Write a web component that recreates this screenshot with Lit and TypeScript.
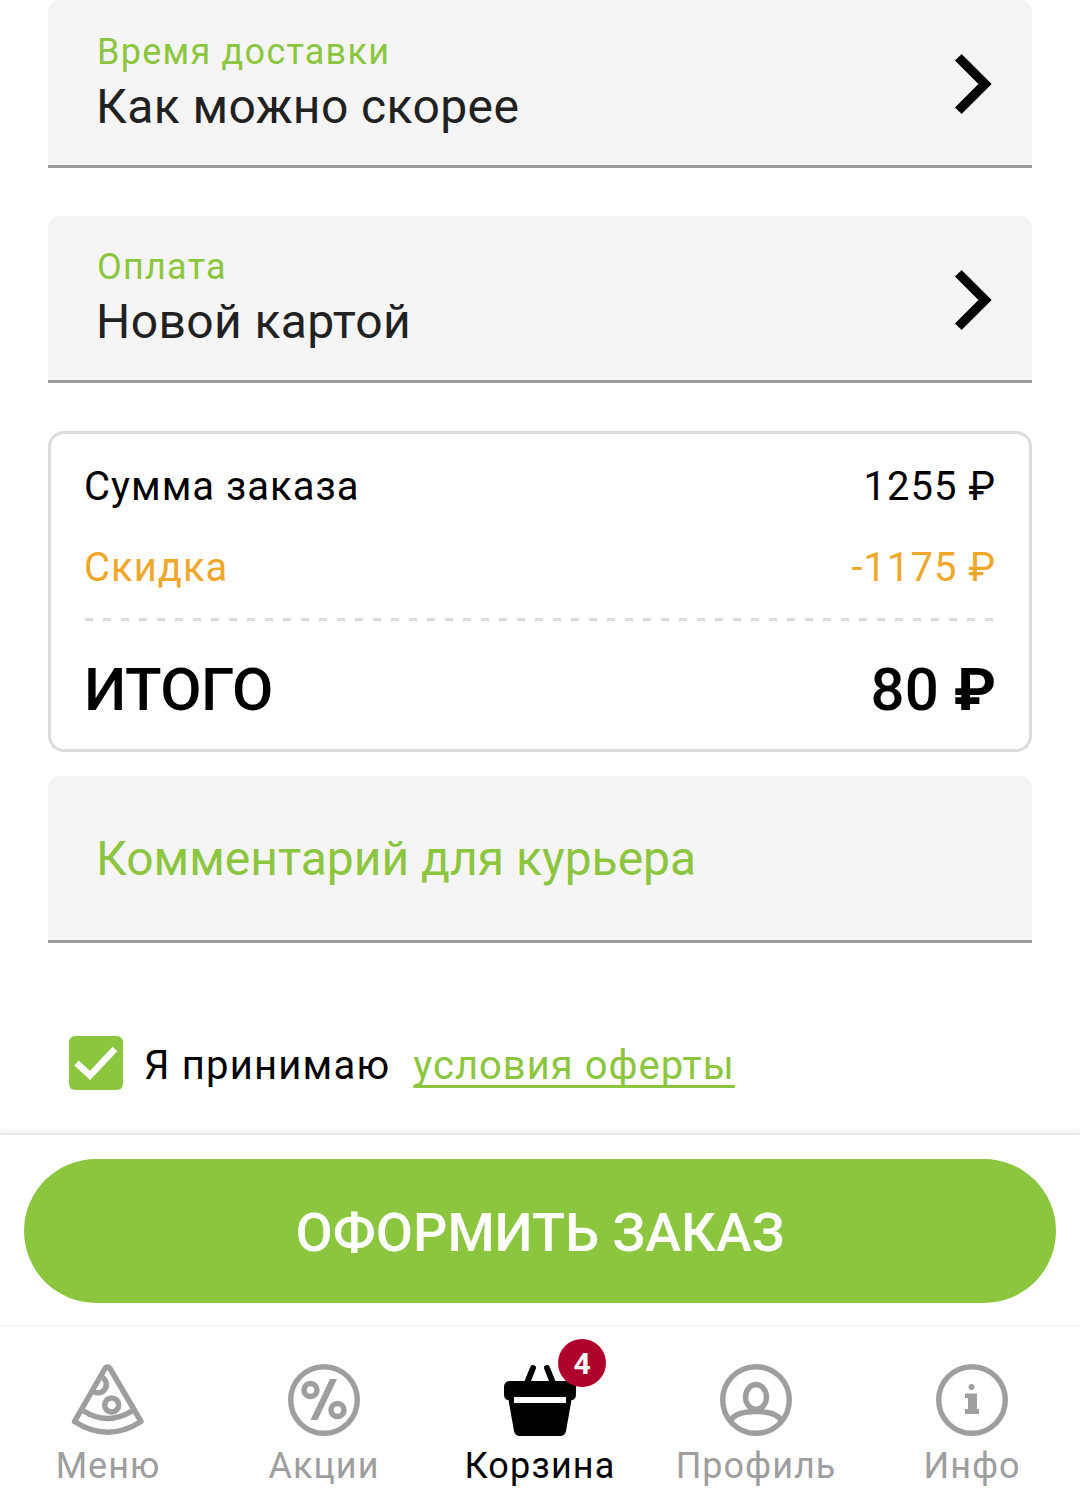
import { LitElement, html, css, svg } from "lit";
import { customElement } from "lit/decorators.js";

const chevron = html`<svg class="chev" width="40" height="64" viewBox="0 0 40 64"><path d="M4.3 5.3 L31 32 L4.3 58.7" fill="none" stroke="#000" stroke-width="9.4" stroke-linejoin="miter"/></svg>`;

const icons: Record<string, unknown> = {
  pizza: svg`<g fill="none" stroke="#9e9e9e" stroke-width="5.5" stroke-linejoin="round">
    <path d="M33 4.5 Q35.5 1.5 38 4.5 L69 57.5 Q35.5 79 2.5 57.5 Z"/>
    <path d="M11.5 47 Q35.5 62 60 47"/>
    <circle cx="39.7" cy="41" r="7"/>
    <path d="M30.5 13.5 A7 7 0 1 1 21.5 27.5"/></g>`,
  percent: svg`<circle cx="36" cy="36" r="33.3" fill="none" stroke="#9e9e9e" stroke-width="5.4"/>
    <g fill="none" stroke="#9e9e9e" stroke-width="5.5"><circle cx="22.5" cy="26" r="6.5"/><circle cx="49.5" cy="46" r="6.5"/></g>
    <polygon points="42,15 49,15 29.5,56 22.5,56" fill="#9e9e9e"/>`,
  profile: svg`<g fill="none" stroke="#9e9e9e" stroke-width="5.4"><circle cx="36" cy="36" r="33.3"/>
    <ellipse cx="36" cy="33" rx="10.5" ry="12.5"/>
    <path d="M10 58 Q14 47.5 36 47.5 Q58 47.5 62 58"/></g>`,
  info: svg`<circle cx="36" cy="36" r="33.3" fill="none" stroke="#9e9e9e" stroke-width="5.4"/>
    <circle cx="35.5" cy="23" r="3" fill="#9e9e9e"/>
    <path d="M29 29.5 H41 V45 H43 V50 H29 V45 H32 V34 H29 Z" fill="#9e9e9e"/>`,
  cart: svg`<path d="M23 19 L29 4 M49 19 L43 4" stroke="#000" stroke-width="6" stroke-linecap="round" fill="none"/>
    <path d="M6 17 H66 Q72 17 72 23 V30 Q72 36 67.5 36 L62 67 Q61 72 56 72 H16 Q11 72 10 67 L4.5 36 Q0 36 0 30 V23 Q0 17 6 17 Z" fill="#000"/>
    <rect x="10" y="33" width="52" height="6" fill="#fff"/>`,
};

@customElement("nav-item")
class NavItem extends LitElement {
  static properties = { icon: {}, label: {}, active: { type: Boolean }, badge: {} };
  icon = "";
  label = "";
  active = false;
  badge = "";
  static styles = css`
    :host { display: flex; flex: 1 1 0; min-width: 0; flex-direction: column; align-items: center; }
    .ico { position: relative; width: 72px; height: 74px; }
    svg { display: block; overflow: visible; }
    .label { margin-top: 4px; font-size: 36px; line-height: 48px; letter-spacing: 1px; color: #9e9e9e; white-space: nowrap; }
    .label.on { color: #000; letter-spacing: 1.2px; }
    .badge { position: absolute; left: 54px; top: -25px; width: 48px; height: 48px; border-radius: 50%;
      background: #b0012c; color: #fff; font-size: 30px; font-weight: 700; display: flex; align-items: center; justify-content: center; }
  `;
  render() {
    return html`<div class="ico"><svg width="72" height="72" viewBox="0 0 72 72">${icons[this.icon]}</svg>
      ${this.badge ? html`<div class="badge">${this.badge}</div>` : ""}</div>
      <div class="label ${this.active ? "on" : ""}">${this.label}</div>`;
  }
}

@customElement("app-root")
export class AppRoot extends LitElement {
  static styles = css`
    :host { display: block; width: 1080px; height: 1505px; overflow: hidden; background: #fff; font-family: Roboto, sans-serif; color: #000; }
    .content { padding: 0 48px; display: flex; flex-direction: column; }
    .field { box-sizing: border-box; height: 167px; background: #f5f5f5; border-bottom: 3px solid #9b9b9b; border-radius: 10px 10px 0 0;
      padding: 0 38px 0 49px; display: flex; align-items: center; justify-content: space-between; }
    .field:first-child { height: 168px; }
    .field + .field { margin-top: 48px; }
    .lab { color: #8cc63f; font-size: 36px; line-height: 40px; letter-spacing: 1.25px; }
    .val { font-size: 48px; line-height: 70px; letter-spacing: 0.4px; color: #212121; margin-left: -1px; }
    .stack { padding-top: 8px; }
    .chev { display: block; margin-top: 3px; }
    .card { box-sizing: border-box; margin-top: 48px; height: 321px; border: 3px solid #dcdcdc; border-radius: 16px; padding: 26px 33px 0; }
    .row { display: flex; justify-content: space-between; font-size: 40px; line-height: 54px; letter-spacing: 1px; height: 81px; }
    .row.off { color: #efa72b; }
    .dash { height: 3px; margin: -4px 0 0 1px; background: repeating-linear-gradient(90deg, #dcdcdc 0 8px, transparent 8px 18px); }
    .total { display: flex; justify-content: space-between; font-size: 60px; font-weight: 500; line-height: 70px; margin-top: 34px; }
    .total .name { letter-spacing: -0.5px; }
    .rub { font-weight: 700; }
    .field.comment { margin-top: 24px; color: #8cc63f; font-size: 48px; padding-left: 48px; }
    .accept { display: flex; align-items: center; height: 54px; margin: 93px 0 0 21px; font-size: 40px; letter-spacing: 1.2px; }
    .accept span, .accept a { padding-top: 4px; }
    .box { width: 54px; height: 54px; border-radius: 6px; background: #8cc63f; margin-right: 21px; flex: none; }
    .box svg { display: block; }
    .accept a { color: #8cc63f; margin-left: 23px; letter-spacing: 1px; text-decoration: underline; text-decoration-thickness: 3px; text-underline-offset: 6px; text-decoration-skip-ink: none; }
    .panel { margin-top: 43px; border-top: 2px solid #e8e8e8; box-shadow: 0 -3px 5px rgba(0,0,0,0.05); background: #fff; padding: 24px 24px 0; height: 194px; box-sizing: border-box; border-bottom: 2px solid #f7f7f7; }
    .btn { box-sizing: border-box; height: 144px; padding-top: 2px; border-radius: 72px; background: #8cc63f; color: #fff; display: flex; align-items: center; justify-content: center;
      font-size: 54px; font-weight: 500; }
    nav { display: flex; padding-top: 37px; }
  `;
  render() {
    return html`
      <div class="content">
        <div class="field"><div class="stack"><div class="lab">Время доставки</div><div class="val">Как можно скорее</div></div>${chevron}</div>
        <div class="field"><div class="stack"><div class="lab">Оплата</div><div class="val">Новой картой</div></div>${chevron}</div>
        <div class="card">
          <div class="row"><span>Сумма заказа</span><span>1255 ₽</span></div>
          <div class="row off"><span>Скидка</span><span>-1175 ₽</span></div>
          <div class="dash"></div>
          <div class="total"><span class="name">ИТОГО</span><span>80 <span class="rub">₽</span></span></div>
        </div>
        <div class="field comment">Комментарий для курьера</div>
        <div class="accept">
          <div class="box"><svg width="54" height="54" viewBox="0 0 54 54"><path d="M7.5 27 L21 39.5 L46 13" fill="none" stroke="#fff" stroke-width="6.5"/></svg></div>
          <span>Я принимаю</span><a>условия оферты</a>
        </div>
      </div>
      <div class="panel"><div class="btn">ОФОРМИТЬ ЗАКАЗ</div></div>
      <nav>
        <nav-item icon="pizza" label="Меню"></nav-item>
        <nav-item icon="percent" label="Акции"></nav-item>
        <nav-item icon="cart" label="Корзина" active badge="4"></nav-item>
        <nav-item icon="profile" label="Профиль"></nav-item>
        <nav-item icon="info" label="Инфо"></nav-item>
      </nav>
    `;
  }
}
